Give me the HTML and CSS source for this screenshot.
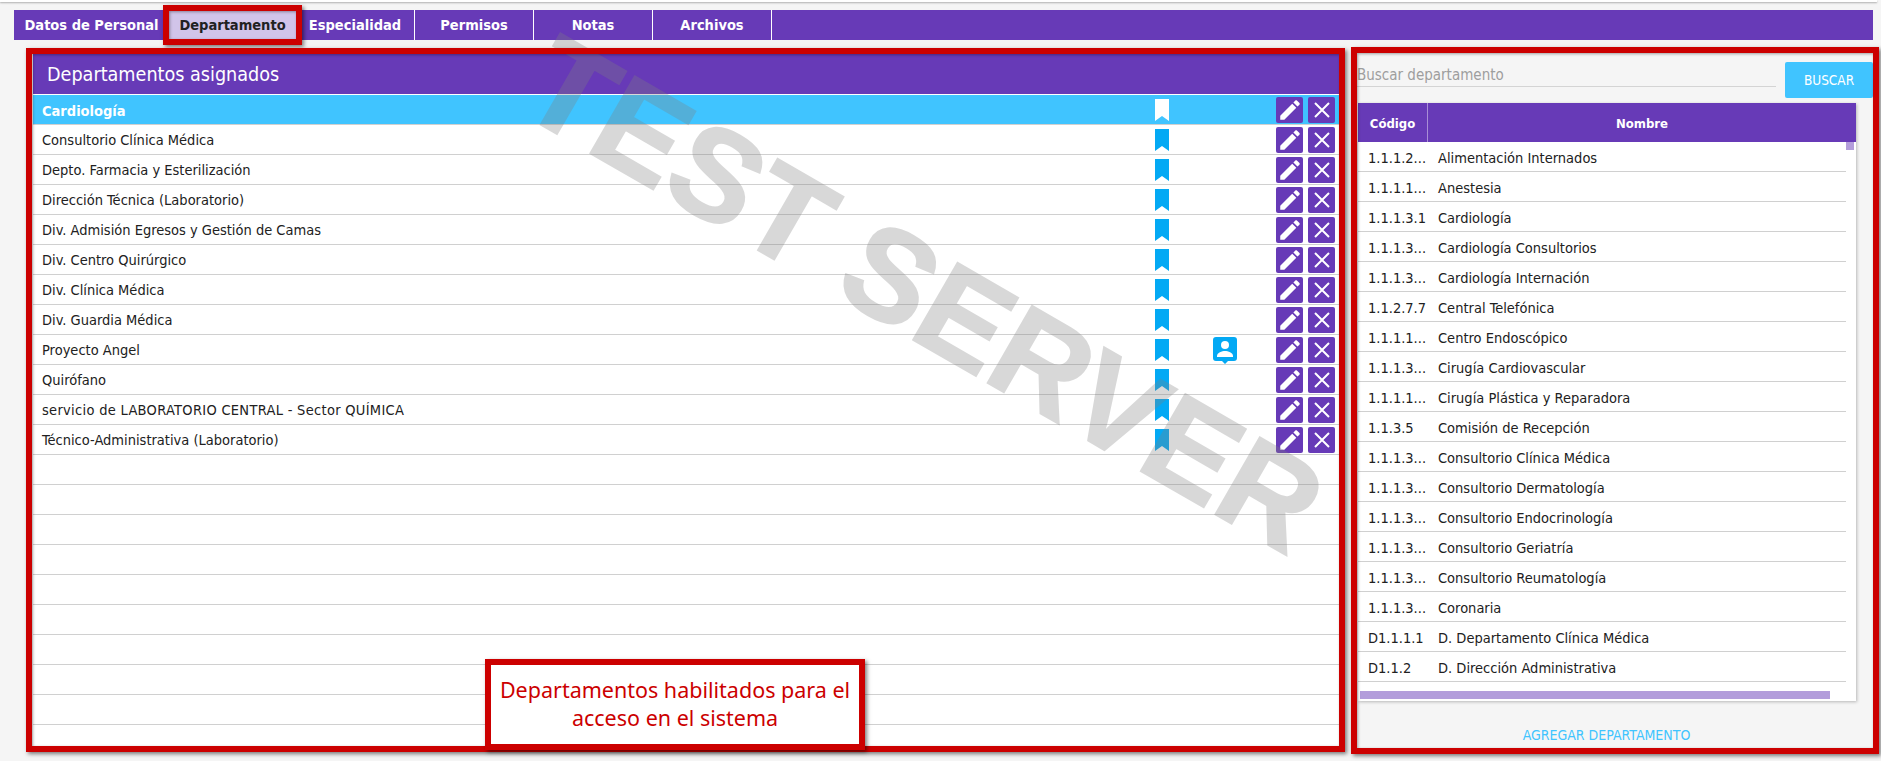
FILE: index.html
```html
<!doctype html>
<html>
<head>
    <meta charset="utf-8">
    <title>Departamentos</title>
    <link rel="stylesheet" href="styles.css">
</head>
<body>
    <svg class="defs" width="0" height="0">
        <symbol id="i-edit" viewBox="0 0 24 24"><path d="M3 17.25V21h3.75L17.81 9.94l-3.75-3.75L3 17.25zM20.71 7.04c.39-.39.39-1.02 0-1.41l-2.34-2.34c-.39-.39-1.02-.39-1.41 0l-1.83 1.83 3.75 3.75 1.83-1.83z"/></symbol>
        <symbol id="i-close" viewBox="0 0 24 24"><path d="M5 5l14 14M19 5L5 19" fill="none" stroke="currentColor" stroke-width="2"/></symbol>
        <symbol id="i-mark" viewBox="0 0 14 22"><path d="M0 0h14v22l-7-5-7 5z"/></symbol>
        <symbol id="i-user" viewBox="0 0 24 27"><path fill="#03a9f4" d="M3 0h18a3 3 0 0 1 3 3v18a3 3 0 0 1-3 3h-6l-3 3-3-3H3a3 3 0 0 1-3-3V3a3 3 0 0 1 3-3z"/><circle fill="#fff" cx="12" cy="8" r="4"/><path fill="#fff" d="M4 19c0-3.500 5-5 8-5s8 1.500 8 5v1H4z"/></symbol>
    </svg>

    <div class="topline"></div>

    <nav class="tabs">
        <a class="tab first">Datos de Personal</a>
        <a class="tab active">Departamento</a>
        <a class="tab">Especialidad</a>
        <a class="tab">Permisos</a>
        <a class="tab">Notas</a>
        <a class="tab">Archivos</a>
    </nav>

    <main class="content">
        <section class="assigned">
            <h2 class="assigned-title">Departamentos asignados</h2>
            <div class="row selected">
                <span class="row-name">Cardiología</span>
                <svg class="mark"><use href="#i-mark"/></svg>
                <span class="user-slot"></span>
                <a class="btn"><svg class="btn-edit"><use href="#i-edit"/></svg></a>
                <a class="btn"><svg class="btn-close"><use href="#i-close"/></svg></a>
            </div>
            <div class="row">
                <span class="row-name">Consultorio Clínica Médica</span>
                <svg class="mark"><use href="#i-mark"/></svg>
                <span class="user-slot"></span>
                <a class="btn"><svg class="btn-edit"><use href="#i-edit"/></svg></a>
                <a class="btn"><svg class="btn-close"><use href="#i-close"/></svg></a>
            </div>
            <div class="row">
                <span class="row-name">Depto. Farmacia y Esterilización</span>
                <svg class="mark"><use href="#i-mark"/></svg>
                <span class="user-slot"></span>
                <a class="btn"><svg class="btn-edit"><use href="#i-edit"/></svg></a>
                <a class="btn"><svg class="btn-close"><use href="#i-close"/></svg></a>
            </div>
            <div class="row">
                <span class="row-name">Dirección Técnica (Laboratorio)</span>
                <svg class="mark"><use href="#i-mark"/></svg>
                <span class="user-slot"></span>
                <a class="btn"><svg class="btn-edit"><use href="#i-edit"/></svg></a>
                <a class="btn"><svg class="btn-close"><use href="#i-close"/></svg></a>
            </div>
            <div class="row">
                <span class="row-name">Div. Admisión Egresos y Gestión de Camas</span>
                <svg class="mark"><use href="#i-mark"/></svg>
                <span class="user-slot"></span>
                <a class="btn"><svg class="btn-edit"><use href="#i-edit"/></svg></a>
                <a class="btn"><svg class="btn-close"><use href="#i-close"/></svg></a>
            </div>
            <div class="row">
                <span class="row-name">Div. Centro Quirúrgico</span>
                <svg class="mark"><use href="#i-mark"/></svg>
                <span class="user-slot"></span>
                <a class="btn"><svg class="btn-edit"><use href="#i-edit"/></svg></a>
                <a class="btn"><svg class="btn-close"><use href="#i-close"/></svg></a>
            </div>
            <div class="row">
                <span class="row-name">Div. Clínica Médica</span>
                <svg class="mark"><use href="#i-mark"/></svg>
                <span class="user-slot"></span>
                <a class="btn"><svg class="btn-edit"><use href="#i-edit"/></svg></a>
                <a class="btn"><svg class="btn-close"><use href="#i-close"/></svg></a>
            </div>
            <div class="row">
                <span class="row-name">Div. Guardia Médica</span>
                <svg class="mark"><use href="#i-mark"/></svg>
                <span class="user-slot"></span>
                <a class="btn"><svg class="btn-edit"><use href="#i-edit"/></svg></a>
                <a class="btn"><svg class="btn-close"><use href="#i-close"/></svg></a>
            </div>
            <div class="row">
                <span class="row-name">Proyecto Angel</span>
                <svg class="mark"><use href="#i-mark"/></svg>
                <span class="user-slot"><svg class="user"><use href="#i-user"/></svg></span>
                <a class="btn"><svg class="btn-edit"><use href="#i-edit"/></svg></a>
                <a class="btn"><svg class="btn-close"><use href="#i-close"/></svg></a>
            </div>
            <div class="row">
                <span class="row-name">Quirófano</span>
                <svg class="mark"><use href="#i-mark"/></svg>
                <span class="user-slot"></span>
                <a class="btn"><svg class="btn-edit"><use href="#i-edit"/></svg></a>
                <a class="btn"><svg class="btn-close"><use href="#i-close"/></svg></a>
            </div>
            <div class="row">
                <span class="row-name caps">servicio de LABORATORIO CENTRAL - Sector QUÍMICA</span>
                <svg class="mark"><use href="#i-mark"/></svg>
                <span class="user-slot"></span>
                <a class="btn"><svg class="btn-edit"><use href="#i-edit"/></svg></a>
                <a class="btn"><svg class="btn-close"><use href="#i-close"/></svg></a>
            </div>
            <div class="row">
                <span class="row-name">Técnico-Administrativa (Laboratorio)</span>
                <svg class="mark"><use href="#i-mark"/></svg>
                <span class="user-slot"></span>
                <a class="btn"><svg class="btn-edit"><use href="#i-edit"/></svg></a>
                <a class="btn"><svg class="btn-close"><use href="#i-close"/></svg></a>
            </div>
            <div class="row"></div>
            <div class="row"></div>
            <div class="row"></div>
            <div class="row"></div>
            <div class="row"></div>
            <div class="row"></div>
            <div class="row"></div>
            <div class="row"></div>
            <div class="row last"></div>
        </section>

        <section class="search">
            <div class="search-bar">
                <div class="search-input">Buscar departamento</div>
                <a class="search-btn">BUSCAR</a>
            </div>
            <div class="list">
                <div class="list-head">
                    <div class="col-code">Código</div>
                    <div class="col-name">Nombre</div>
                </div>
                <div class="list-body">
                    <div class="item"><span class="item-code">1.1.1.2...</span><span>Alimentación Internados</span></div>
                    <div class="item"><span class="item-code">1.1.1.1...</span><span>Anestesia</span></div>
                    <div class="item"><span class="item-code">1.1.1.3.1</span><span>Cardiología</span></div>
                    <div class="item"><span class="item-code">1.1.1.3...</span><span>Cardiología Consultorios</span></div>
                    <div class="item"><span class="item-code">1.1.1.3...</span><span>Cardiología Internación</span></div>
                    <div class="item"><span class="item-code">1.1.2.7.7</span><span>Central Telefónica</span></div>
                    <div class="item"><span class="item-code">1.1.1.1...</span><span>Centro Endoscópico</span></div>
                    <div class="item"><span class="item-code">1.1.1.3...</span><span>Cirugía Cardiovascular</span></div>
                    <div class="item"><span class="item-code">1.1.1.1...</span><span>Cirugía Plástica y Reparadora</span></div>
                    <div class="item"><span class="item-code">1.1.3.5</span><span>Comisión de Recepción</span></div>
                    <div class="item"><span class="item-code">1.1.1.3...</span><span>Consultorio Clínica Médica</span></div>
                    <div class="item"><span class="item-code">1.1.1.3...</span><span>Consultorio Dermatología</span></div>
                    <div class="item"><span class="item-code">1.1.1.3...</span><span>Consultorio Endocrinología</span></div>
                    <div class="item"><span class="item-code">1.1.1.3...</span><span>Consultorio Geriatría</span></div>
                    <div class="item"><span class="item-code">1.1.1.3...</span><span>Consultorio Reumatología</span></div>
                    <div class="item"><span class="item-code">1.1.1.3...</span><span>Coronaria</span></div>
                    <div class="item"><span class="item-code">D1.1.1.1</span><span>D. Departamento Clínica Médica</span></div>
                    <div class="item"><span class="item-code">D1.1.2</span><span>D. Dirección Administrativa</span></div>
                    <div class="scroll-y"></div>
                </div>
                <div class="scroll-x"><div class="scroll-x-thumb"></div></div>
            </div>
            <a class="add-link">AGREGAR DEPARTAMENTO</a>
        </section>
    </main>

    <div class="watermark">TEST SERVER</div>

    <div class="frame frame-tab"></div>
    <div class="frame frame-left"></div>
    <div class="frame frame-right"></div>
    <div class="frame callout">Departamentos habilitados para el acceso en el sistema</div>
</body>
</html>
```

FILE: styles.css
```css
html, body {
    margin: 0;
    height: 761px;
    overflow: hidden;
}
body {
    position: relative;
    background: #f5f5f5;
    color: #212121;
    font: 14.5px/1.2 "DejaVu Sans", sans-serif;
    font-stretch: condensed;
}
.defs {
    position: absolute;
}
.topline {
    width: 1877px;
    height: 2px;
    background: #fff;
    box-shadow: 0 1px 2px rgba(0,0,0,.3);
}

/* tabs */
.tabs {
    display: flex;
    width: 1859px;
    height: 30px;
    margin: 8px 0 0 14px;
    background: #673ab7;
}
.tab {
    box-sizing: border-box;
    width: 119px;
    border-right: 1px solid #fff;
    color: #fff;
    font-weight: bold;
    line-height: 31px;
    text-align: center;
}
.tab.first {
    width: 155px;
    border-right: 0;
}
.tab.active {
    width: 127px;
    border-right: 0;
    background: #d1c4e9;
    color: #212121;
}

.content {
    display: flex;
    align-items: flex-start;
    padding: 14px 7px 0 33px;
}

/* left panel */
.assigned {
    width: 1306px;
    height: 692px;
    overflow: hidden;
    background: #fff;
}
.assigned-title {
    height: 40px;
    margin: 0;
    padding-left: 14px;
    border-bottom: 1px solid #fff;
    background: #673ab7;
    color: #fff;
    font-size: 19.6px;
    font-weight: normal;
    line-height: 42px;
}
.row {
    box-sizing: border-box;
    display: flex;
    align-items: center;
    height: 30px;
    padding: 1px 4px 0 9px;
    border-bottom: 1px solid #d0d0d0;
}
.row.selected {
    background: #40c4ff;
    color: #fff;
    font-weight: bold;
}
.row-name {
    width: 1113px;
    padding-top: 2px;
}
.selected .row-name {
    padding-top: 4px;
}
.row-name.caps {
    letter-spacing: .3px;
}
.mark {
    width: 14px;
    height: 22px;
    fill: #03a9f4;
}
.selected .mark {
    fill: #fff;
}
.user-slot {
    width: 107px;
    padding-left: 44px;
    box-sizing: border-box;
    height: 27px;
}
.user {
    display: block;
    width: 24px;
    height: 27px;
}
.btn {
    display: flex;
    align-items: center;
    justify-content: center;
    width: 27px;
    height: 26px;
    margin-right: 5px;
    border-radius: 2px;
    background: #673ab7;
    color: #fff;
}
.btn:last-child {
    margin-right: 0;
}
.btn-edit {
    width: 26px;
    height: 26px;
    fill: #fff;
}
.btn-close {
    width: 24px;
    height: 24px;
}

/* right panel */
.search {
    display: flex;
    flex-direction: column;
    width: 517px;
    margin-left: 18px;
}
.search-bar {
    display: flex;
    height: 49px;
    padding-top: 8px;
    box-sizing: border-box;
}
.search-input {
    box-sizing: border-box;
    width: 419px;
    height: 25px;
    border-bottom: 1px solid #d4d4d4;
    color: #9e9e9e;
    font-size: 15px;
    line-height: 27px;
}
.search-btn {
    width: 88px;
    height: 36px;
    margin-left: 9px;
    border-radius: 2px;
    background: #40c4ff;
    color: #fff;
    font-size: 13.5px;
    line-height: 36px;
    text-align: center;
}
.list {
    width: 498px;
    margin: 0 0 0 1px;
    background: #fff;
    box-shadow: 1px 1px 3px rgba(0,0,0,.25);
}
.list-head {
    display: flex;
    height: 39px;
    background: #673ab7;
    color: #fff;
    font-size: 13px;
    font-weight: bold;
    line-height: 41px;
    text-align: center;
}
.col-code {
    width: 69px;
    border-right: 1px solid #a98ed6;
}
.col-name {
    flex: 1;
}
.list-body {
    position: relative;
}
.item {
    box-sizing: border-box;
    display: flex;
    width: 488px;
    height: 30px;
    padding-left: 10px;
    border-bottom: 1px solid #d0d0d0;
    line-height: 33px;
}
.item-code {
    width: 70px;
}
.scroll-y {
    position: absolute;
    top: 0;
    right: 2px;
    width: 8px;
    height: 8px;
    background: #b39ddb;
}
.scroll-x {
    height: 19px;
    padding: 9px 0 0 2px;
    box-sizing: border-box;
}
.scroll-x-thumb {
    width: 470px;
    height: 8px;
    background: #b39ddb;
}
.add-link {
    margin-top: 26px;
    color: #40c4ff;
    font-size: 14px;
    text-align: center;
    transform: translateX(-9px);
}

/* watermark and the red notes laid over the screenshot */
.watermark {
    position: absolute;
    left: 474px;
    top: 230px;
    width: 900px;
    color: #808080;
    font: bold 129px/1 "Liberation Sans", sans-serif;
    font-stretch: normal;
    -webkit-text-stroke: 2px #808080;
    text-align: center;
    white-space: nowrap;
    opacity: .3;
    transform: rotate(30deg);
    pointer-events: none;
}
.frame {
    position: absolute;
    box-sizing: border-box;
    border: 6px solid #c00;
    box-shadow: 2px 2px 4px rgba(0,0,0,.5), inset 1px 1px 3px rgba(0,0,0,.35);
}
.frame-tab {
    left: 163px;
    top: 5px;
    width: 139px;
    height: 40px;
}
.frame-left {
    left: 26px;
    top: 48px;
    width: 1319px;
    height: 704px;
}
.frame-right {
    left: 1351px;
    top: 47px;
    width: 528px;
    height: 707px;
}
.callout {
    left: 485px;
    top: 659px;
    width: 380px;
    height: 91px;
    padding-top: 11px;
    background: #fff;
    color: #c00;
    font: 21.5px/28px "Noto Sans", sans-serif;
    text-align: center;
    box-shadow: 2px 2px 4px rgba(0,0,0,.5);
}
```
